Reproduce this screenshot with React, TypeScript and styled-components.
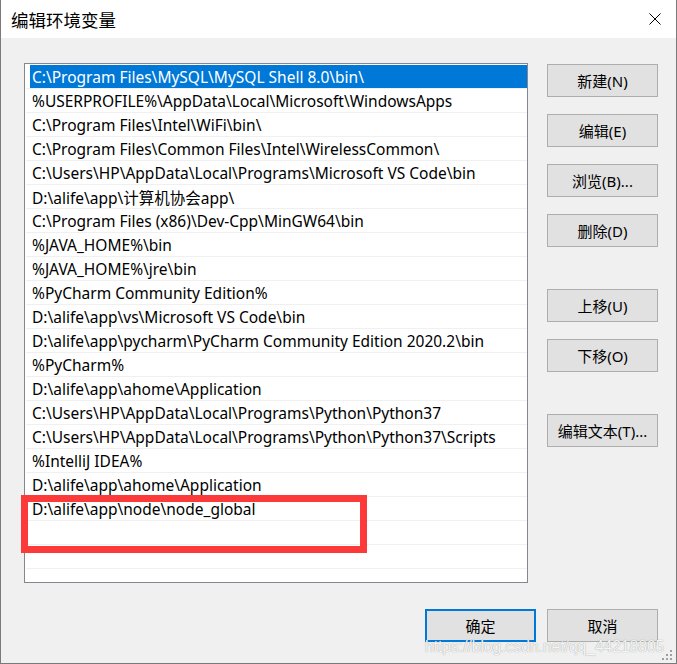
import React from "react";
import styled, { createGlobalStyle } from "styled-components";

const Global = createGlobalStyle`
  html, body { margin: 0; padding: 0; background: #f0f0f0; }
  body { font-family: "Noto Sans", "Noto Sans CJK SC", sans-serif; }
`;

const Window = styled.div`
  position: relative;
  box-sizing: border-box;
  width: 677px;
  height: 664px;
  background: #f0f0f0;
  border: 1px solid #7a7a7a;
  border-top: none;
  display: flex;
  flex-direction: column;
  overflow: hidden;
`;

const TitleBar = styled.div`
  height: 38px;
  flex: none;
  background: #ffffff;
  display: flex;
  align-items: center;
  justify-content: space-between;
  padding: 0 15px 0 10px;
  font-family: "Noto Sans CJK SC", sans-serif;
  font-size: 17.5px;
  color: #000;
`;

const Close = styled.svg`
  width: 12px;
  height: 12px;
  display: block;
`;

const Body = styled.div`
  display: flex;
  flex-direction: column;
  padding: 25px 18px 0 23px;
`;

const Main = styled.div`
  display: flex;
  gap: 19px;
`;

const List = styled.div`
  box-sizing: border-box;
  width: 504px;
  height: 520px;
  background: #fff;
  border: 1px solid #828790;
  padding-top: 1px;
  overflow: hidden;
`;

const Row = styled.div`
  height: 23px;
  margin-left: 1px;
  border-bottom: 1px solid #f0f0f0;
  display: flex;
`;

const Cell = styled.div<{ $selected?: boolean }>`
  flex: 1;
  margin-left: 4px;
  padding: 1px 0 0 2px;
  display: flex;
  align-items: center;
  font-family: "Noto Sans", "Noto Sans CJK SC", sans-serif;
  font-size: 15.5px;
  white-space: nowrap;
  color: ${(p) => (p.$selected ? "#ffffff" : "#000000")};
  background: ${(p) => (p.$selected ? "#0078d7" : "transparent")};
`;

const Side = styled.div`
  display: flex;
  flex-direction: column;
  padding-top: 1px;
`;

const Btn = styled.button<{ $gap?: number; $primary?: boolean }>`
  box-sizing: border-box;
  width: 111px;
  height: 33px;
  margin-top: ${(p) => p.$gap ?? 0}px;
  background: #e1e1e1;
  border: ${(p) => (p.$primary ? "2px solid #0078d7" : "1px solid #adadad")};
  font-family: "Noto Sans", "Noto Sans CJK SC", sans-serif;
  font-size: 15px;
  color: #000;
  padding: 0;
  display: flex;
  align-items: center;
  justify-content: center;
`;

const Footer = styled.div`
  display: flex;
  justify-content: flex-end;
  gap: 11px;
  margin-top: 26px;
`;

const Highlight = styled.div`
  position: absolute;
  left: 20px;
  top: 495px;
  width: 346px;
  height: 58px;
  box-sizing: border-box;
  border: 7px solid #fc3a3a;
`;

const Watermark = styled.div`
  position: absolute;
  left: 424px;
  top: 638px;
  font-family: "Liberation Sans", sans-serif;
  font-size: 15.6px;
  color: rgba(255, 255, 255, 0.92);
  text-shadow: 0 0 1px rgba(110, 110, 110, 0.8);
  white-space: nowrap;
`;

const Grip = styled.svg`
  position: absolute;
  right: 4px;
  bottom: 3px;
  width: 10px;
  height: 10px;
`;

const items = [
  "C:\\Program Files\\MySQL\\MySQL Shell 8.0\\bin\\",
  "%USERPROFILE%\\AppData\\Local\\Microsoft\\WindowsApps",
  "C:\\Program Files\\Intel\\WiFi\\bin\\",
  "C:\\Program Files\\Common Files\\Intel\\WirelessCommon\\",
  "C:\\Users\\HP\\AppData\\Local\\Programs\\Microsoft VS Code\\bin",
  "D:\\alife\\app\\计算机协会app\\",
  "C:\\Program Files (x86)\\Dev-Cpp\\MinGW64\\bin",
  "%JAVA_HOME%\\bin",
  "%JAVA_HOME%\\jre\\bin",
  "%PyCharm Community Edition%",
  "D:\\alife\\app\\vs\\Microsoft VS Code\\bin",
  "D:\\alife\\app\\pycharm\\PyCharm Community Edition 2020.2\\bin",
  "%PyCharm%",
  "D:\\alife\\app\\ahome\\Application",
  "C:\\Users\\HP\\AppData\\Local\\Programs\\Python\\Python37",
  "C:\\Users\\HP\\AppData\\Local\\Programs\\Python\\Python37\\Scripts",
  "%IntelliJ IDEA%",
  "D:\\alife\\app\\ahome\\Application",
  "D:\\alife\\app\\node\\node_global",
  "",
  "",
  "",
];

const sideButtons: { label: string; gap: number }[] = [
  { label: "新建(N)", gap: 0 },
  { label: "编辑(E)", gap: 17 },
  { label: "浏览(B)...", gap: 17 },
  { label: "删除(D)", gap: 17 },
  { label: "上移(U)", gap: 42 },
  { label: "下移(O)", gap: 17 },
  { label: "编辑文本(T)...", gap: 42 },
];

export default function App() {
  return (
    <>
      <Global />
      <Window>
        <TitleBar>
          <span>编辑环境变量</span>
          <Close viewBox="0 0 12 12">
            <path d="M0.5 0.5 L11.5 11.5 M11.5 0.5 L0.5 11.5" stroke="#000" strokeWidth="1" fill="none" />
          </Close>
        </TitleBar>
        <Body>
          <Main>
            <List>
              {items.map((t, i) => (
                <Row key={i}>
                  <Cell $selected={i === 0}>{t}</Cell>
                </Row>
              ))}
            </List>
            <Side>
              {sideButtons.map((b) => (
                <Btn key={b.label} $gap={b.gap}>
                  {b.label}
                </Btn>
              ))}
            </Side>
          </Main>
          <Footer>
            <Btn $primary>确定</Btn>
            <Btn>取消</Btn>
          </Footer>
        </Body>
        <Highlight />
        <Watermark>https://blog.csdn.net/qq_44218805</Watermark>
        <Grip viewBox="0 0 10 10">
          {[
            [8, 0], [8, 4], [4, 4], [8, 8], [4, 8], [0, 8],
          ].map(([x, y], i) => (
            <rect key={i} x={x} y={y} width="2" height="2" fill="#a0a0a0" />
          ))}
        </Grip>
      </Window>
    </>
  );
}
